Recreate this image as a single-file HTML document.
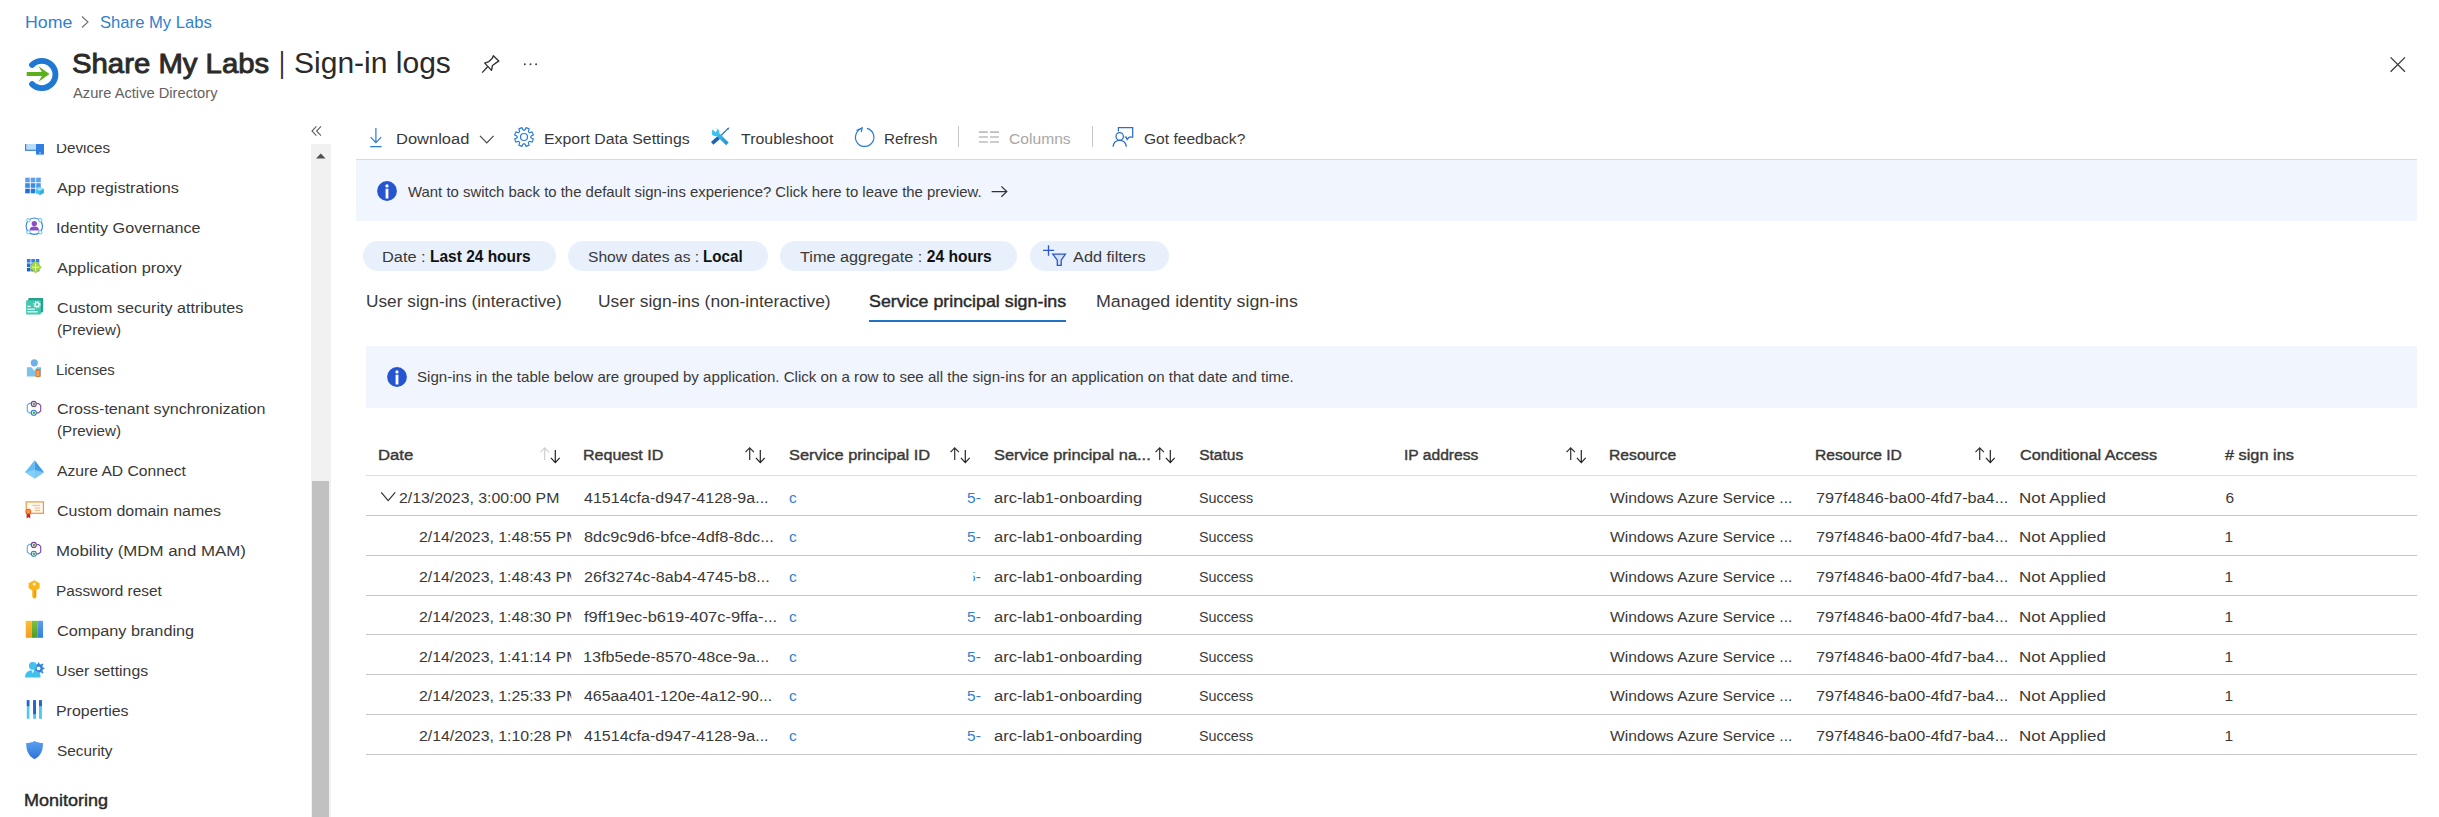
<!DOCTYPE html>
<html lang="en">
<head>
<meta charset="utf-8">
<title>Share My Labs | Sign-in logs - Azure Active Directory</title>
<style>
html,body{margin:0;padding:0;background:#fff}
body{width:2439px;height:817px;overflow:hidden;position:relative;font-family:"Liberation Sans",sans-serif;color:#323130}
.abs{position:absolute;display:block}
.t{position:absolute;white-space:nowrap;line-height:normal;transform-origin:0 0;text-decoration:none;color:#3a3937;font-weight:400}
.bb{font-weight:700}
.b,.sb{font-weight:400;-webkit-text-stroke:0.42px currentColor}
.ttl .b{-webkit-text-stroke:0.9px currentColor}
.lnk{color:#337fd0}
h1,h2,ul,li{margin:0;padding:0;font-weight:400;font-size:inherit;list-style:none}
#side{position:absolute;left:0;top:144px;width:310px;height:673px;overflow:hidden}
#side .in{position:absolute;left:0;top:-144px;width:310px;height:817px}
#sb{position:absolute;left:310.8px;top:144px;width:20px;height:673px;background:#f1f1f1}
#sb .thumb{position:absolute;left:1.2px;top:337px;width:17px;height:340px;background:#c1c1c1}
#tbline{position:absolute;left:356px;top:158.8px;width:2061px;height:1.3px;background:#d9d9df}
.banner{position:absolute;background:#f1f5fd}
.pill{position:absolute;top:241.2px;height:30.1px;border-radius:15.1px;background:#e7f0fb}
.tr{position:absolute;left:366px;width:2051px;height:1px;background:#c6c6c6}
#thline{position:absolute;left:366px;top:475px;width:2051px;height:1px;background:#dedede}
</style>
</head>
<body>
<header>
<a class="t lnk" style="left:24.8px;top:13px;font-size:17.0px;transform:scaleX(1.0435);">Home</a>
<svg class="abs" style="left:80px;top:15px" width="10" height="14" viewBox="0 0 10 14"><path d="M2 1.5 L8 7 L2 12.5" fill="none" stroke="#6f6d6b" stroke-width="1.1"/></svg>
<a class="t lnk" style="left:99.6px;top:13px;font-size:17.0px;transform:scaleX(0.9786);">Share My Labs</a>
<svg class="abs" style="left:20px;top:50px" width="48" height="48" viewBox="0 0 48 48">
<path d="M12.1 14.9 A13.65 13.65 0 1 1 12.1 34.1" fill="none" stroke="#1f78d1" stroke-width="5.9" stroke-linecap="round"/>
<path d="M6.7 24 H27" fill="none" stroke="#5bb01c" stroke-width="4"/>
<path d="M18.5 16.3 L29.5 24 L18.5 31.7 L23 24 Z" fill="#5bb01c"/>
</svg>
<h1 class="ttl"><span class="t b" style="left:72.3px;top:48px;font-size:27.8px;transform:scaleX(1.0548);color:#2b2a29;">Share My Labs</span><span class="t" style="left:278.7px;top:47px;font-size:29.0px;color:#3a2a20;transform:scaleX(0.8);">|</span><span class="t" style="left:293.5px;top:47px;font-size:28.6px;transform:scaleX(1.0499);color:#2b2a29;">Sign-in logs</span></h1>
<span class="t" style="left:73.0px;top:85px;font-size:14.6px;transform:scaleX(1.0065);color:#646260;">Azure Active Directory</span>
<svg class="abs" style="left:480px;top:54px" width="22" height="22" viewBox="0 0 22 22"><g fill="none" stroke="#323130" stroke-width="1.35" stroke-linejoin="round" stroke-linecap="butt">
<path d="M13.3 1.7 L18.8 7.1 L16.7 8.4 L12.5 11.5 L11.5 16.4 L4.7 9.1 L8.9 7.6 L12.3 4.2 Z"/><path d="M7.6 12.8 L2.2 18.6"/></g></svg>
<svg class="abs" style="left:522px;top:62px" width="18" height="6" viewBox="0 0 18 6"><circle cx="2.8" cy="2.3" r="0.95" fill="#3b3a39"/><circle cx="8.5" cy="2.3" r="0.95" fill="#3b3a39"/><circle cx="14.1" cy="2.3" r="0.95" fill="#3b3a39"/></svg>
<svg class="abs" style="left:2388px;top:55px" width="20" height="20" viewBox="0 0 20 20"><path d="M2.6 2.4 L17 16.8 M17 2.4 L2.6 16.8" stroke="#3b3a39" stroke-width="1.3" fill="none"/></svg>
</header>
<div class="abs" style="left:309.6px;top:124px;width:14px;height:14px"><svg class="abs" style="left:0;top:0" width="14" height="14" viewBox="0 0 14 14"><path d="M6.4 2.4 L2 7 L6.4 11.6 M11 2.4 L6.6 7 L11 11.6" fill="none" stroke="#605e5c" stroke-width="1.1"/></svg></div>
<nav id="side"><div class="in">
<ul>
<li><svg class="abs" style="left:24px;top:137px" width="22" height="20" viewBox="0 0 22 20"><rect x="1.6" y="2" width="11" height="11.3" fill="#b9dcf7" stroke="#3f7edc" stroke-width="1.2"/><rect x="12" y="2" width="8" height="15.6" fill="#2f7fe0"/><rect x="15" y="15.4" width="2" height="1.2" fill="#9cc9f5"/></svg><span class="t" style="left:55.9px;top:139px;font-size:15.5px;transform:scaleX(0.9820);">Devices</span></li>
<li><svg class="abs" style="left:24px;top:176px" width="22" height="22" viewBox="0 0 22 22"><rect x="1.2" y="1.7" width="4.6" height="4.6" fill="#5ea0ef"/><rect x="6.7" y="1.7" width="4.6" height="4.6" fill="#5ea0ef"/><rect x="12.2" y="1.7" width="4.6" height="4.6" fill="#5ea0ef"/><rect x="1.2" y="7.2" width="4.6" height="4.6" fill="#3b8be6"/><rect x="6.7" y="7.2" width="4.6" height="4.6" fill="#3b8be6"/><rect x="12.2" y="7.2" width="4.6" height="4.6" fill="#4f98ec"/><rect x="1.2" y="12.7" width="4.6" height="4.6" fill="#1f6fd6"/><rect x="6.7" y="12.7" width="4.6" height="4.6" fill="#2a7ade"/><rect x="12.2" y="12.7" width="4.6" height="4.6" fill="#3b8be6"/><path d="M15.8 11 L19.8 13 L19.8 17 L15.8 19 L11.9 17 L11.9 13 Z" fill="#49c5ee"/><path d="M15.8 11 L19.8 13 L15.8 15 L11.9 13 Z" fill="#9be3f9"/><path d="M15.8 15 L15.8 19 L19.8 17 L19.8 13 Z" fill="#32b0e7"/></svg><span class="t" style="left:56.9px;top:179px;font-size:15.5px;transform:scaleX(1.0475);">App registrations</span></li>
<li><svg class="abs" style="left:24px;top:216px" width="22" height="22" viewBox="0 0 22 22"><circle cx="10.3" cy="10.2" r="8.2" fill="none" stroke="#3b7fd9" stroke-width="1.1"/><circle cx="10.3" cy="7.6" r="2.7" fill="#8a4fc4"/><path d="M5.6 14.6 C5.6 11.2 8 10.6 10.3 10.6 C12.6 10.6 15 11.2 15 14.6 Z" fill="#8a4fc4"/><g fill="#fff" stroke="#4fc3e8" stroke-width="1"><circle cx="4.4" cy="4.2" r="1.7"/><circle cx="16.2" cy="4.2" r="1.7"/><circle cx="4.4" cy="16.2" r="1.7"/><circle cx="16.2" cy="16.2" r="1.7"/></g></svg><span class="t" style="left:55.9px;top:219px;font-size:15.5px;transform:scaleX(1.0423);">Identity Governance</span></li>
<li><svg class="abs" style="left:24px;top:256px" width="22" height="22" viewBox="0 0 22 22"><rect x="2.9" y="3.0" width="3.6" height="3.6" fill="#2f7fe0"/><rect x="7.3" y="3.0" width="3.6" height="3.6" fill="#2f7fe0"/><rect x="11.7" y="3.0" width="3.6" height="3.6" fill="#2f7fe0"/><rect x="2.9" y="7.4" width="3.6" height="3.6" fill="#1f6fd6"/><rect x="7.3" y="7.4" width="3.6" height="3.6" fill="#1f6fd6"/><rect x="11.7" y="7.4" width="3.6" height="3.6" fill="#1f6fd6"/><rect x="2.9" y="11.8" width="3.6" height="3.6" fill="#1a5fc0"/><rect x="7.3" y="11.8" width="3.6" height="3.6" fill="#1a5fc0"/><rect x="11.7" y="11.8" width="3.6" height="3.6" fill="#1a5fc0"/><path d="M11.6 4.8 L17.8 11.2 L11.6 17.6 L5.4 11.2 Z" fill="#a6d63f"/><path d="M11.6 7.6 L11.6 14.8 M8 11.2 L15.2 11.2" stroke="#e8f5b8" stroke-width="1.1"/></svg><span class="t" style="left:56.9px;top:259px;font-size:15.5px;transform:scaleX(1.0568);">Application proxy</span></li>
<li><svg class="abs" style="left:24px;top:296px" width="22" height="22" viewBox="0 0 22 22"><rect x="4.3" y="2" width="14.9" height="14.4" rx="0.8" fill="#27a08c"/><rect x="2.1" y="4.3" width="14.8" height="14.3" rx="0.8" fill="#43c8b0"/><path d="M3.4 10.4 H6.6 M3.4 13.1 H10.9 M3.4 15.8 H13.6" stroke="#e9fbf7" stroke-width="1.4"/><circle cx="13.1" cy="8.6" r="2" fill="none" stroke="#fff" stroke-width="1.3"/><circle cx="13.1" cy="8.6" r="3.1" fill="none" stroke="#fff" stroke-width="1.1" stroke-dasharray="1.1 1.33"/></svg><span class="t" style="left:56.9px;top:299px;font-size:15.5px;transform:scaleX(1.0394);">Custom security attributes</span><span class="t" style="left:56.9px;top:321px;font-size:15.5px;transform:scaleX(0.9772);">(Preview)</span></li>
<li><svg class="abs" style="left:24px;top:357px" width="22" height="22" viewBox="0 0 22 22"><circle cx="10.3" cy="5.8" r="3.6" fill="#6fb2e6"/><path d="M2.9 10.2 L7.6 10.2 L10.3 14 L13 10.2 L17.1 10.2 L17.1 19.6 L2.9 19.6 Z" fill="#7cc3e8"/><rect x="11.6" y="12" width="4.8" height="8" rx="0.6" fill="#e8792a"/><rect x="12.6" y="14" width="2.6" height="5" fill="#f3a35c"/></svg><span class="t" style="left:55.9px;top:361px;font-size:15.5px;transform:scaleX(0.9615);">Licenses</span></li>
<li><svg class="abs" style="left:24px;top:398px" width="22" height="22" viewBox="0 0 22 22"><g fill="none" stroke-width="1.15" stroke-linejoin="round"><path d="M7.6 5.3 H5.3 L3.3 7.2 V13.1 L5.3 14.9 H7.4" stroke="#62add8"/><path d="M12.2 5.5 H14.5 L16.7 7.4 V13 L14.5 14.9 H12.2" stroke="#8448ad"/></g><circle cx="9.8" cy="5.9" r="2.5" fill="#fff" stroke="#7a3fa6" stroke-width="1.15"/><circle cx="9.9" cy="5.9" r="1.25" fill="#5fa82e"/><circle cx="9.8" cy="14.7" r="2.5" fill="#fff" stroke="#2f7fd0" stroke-width="1.15"/><circle cx="9.9" cy="14.7" r="1.25" fill="#5fa82e"/></svg><span class="t" style="left:56.9px;top:400px;font-size:15.5px;transform:scaleX(1.0384);">Cross-tenant synchronization</span><span class="t" style="left:56.9px;top:422px;font-size:15.5px;transform:scaleX(0.9772);">(Preview)</span></li>
<li><svg class="abs" style="left:24px;top:459px" width="22" height="22" viewBox="0 0 22 22"><path d="M10.7 1.2 L1 13.2 L10.7 19.4 Z" fill="#62bdf3"/><path d="M10.7 1.2 L20 13.2 L10.7 19.4 Z" fill="#3f9ae8"/><path d="M1 13.2 L10.7 10.8 L20 13.2 L10.7 19.4 Z" fill="#8fd6f9" opacity="0.75"/></svg><span class="t" style="left:56.9px;top:462px;font-size:15.5px;transform:scaleX(1.0104);">Azure AD Connect</span></li>
<li><svg class="abs" style="left:24px;top:499px" width="22" height="22" viewBox="0 0 22 22"><rect x="2.2" y="2.9" width="17.2" height="11.4" fill="#fff8ef" stroke="#e99a3f" stroke-width="1.2"/><path d="M8.4 6.4 H16 M10.6 9 H16 M10.6 11.4 H16" stroke="#f0b27a" stroke-width="0.9"/><path d="M2.6 14 L2.6 19.4 L4.4 18 L6.2 19.4 L6.2 14 Z" fill="#c8241c"/><circle cx="4.4" cy="12.6" r="2.5" fill="#f59a2e" stroke="#e4572b" stroke-width="0.9"/></svg><span class="t" style="left:56.9px;top:502px;font-size:15.5px;transform:scaleX(1.0293);">Custom domain names</span></li>
<li><svg class="abs" style="left:24px;top:539px" width="22" height="22" viewBox="0 0 22 22"><g fill="none" stroke-width="1.15" stroke-linejoin="round"><path d="M7.6 5.3 H5.3 L3.3 7.2 V13.1 L5.3 14.9 H7.4" stroke="#62add8"/><path d="M12.2 5.5 H14.5 L16.7 7.4 V13 L14.5 14.9 H12.2" stroke="#8448ad"/></g><circle cx="9.8" cy="5.9" r="2.5" fill="#fff" stroke="#7a3fa6" stroke-width="1.15"/><circle cx="9.9" cy="5.9" r="1.25" fill="#5fa82e"/><circle cx="9.8" cy="14.7" r="2.5" fill="#fff" stroke="#2f7fd0" stroke-width="1.15"/><circle cx="9.9" cy="14.7" r="1.25" fill="#5fa82e"/></svg><span class="t" style="left:55.8px;top:542px;font-size:15.5px;transform:scaleX(1.0860);">Mobility (MDM and MAM)</span></li>
<li><svg class="abs" style="left:24px;top:578px" width="22" height="24" viewBox="0 0 22 24"><path d="M10.2 2.2 L15.6 5.2 L15.6 10 L12.2 12.6 L12.2 19 L10.2 20.8 L8.2 19 L8.2 12.6 L4.6 10 L4.6 5.2 Z" fill="#f9b51c"/><circle cx="10.2" cy="6" r="1.5" fill="#fff3cf"/><path d="M10.2 12 L10.2 20.6 L12.2 19 L12.2 12.6 Z" fill="#e89a10"/></svg><span class="t" style="left:55.9px;top:582px;font-size:15.5px;transform:scaleX(0.9895);">Password reset</span></li>
<li><svg class="abs" style="left:24px;top:619px" width="22" height="22" viewBox="0 0 22 22"><defs><linearGradient id="gy" x1="0" y1="0" x2="0" y2="1"><stop offset="0" stop-color="#fbc02d"/><stop offset="1" stop-color="#f59a23"/></linearGradient><linearGradient id="gg" x1="0" y1="0" x2="0" y2="1"><stop offset="0" stop-color="#7cc142"/><stop offset="1" stop-color="#4c9a2a"/></linearGradient><linearGradient id="gb" x1="0" y1="0" x2="0" y2="1"><stop offset="0" stop-color="#5ea0ef"/><stop offset="1" stop-color="#2f7fe0"/></linearGradient></defs><rect x="1.8" y="1.8" width="5.5" height="17" fill="url(#gy)"/><rect x="7.5" y="1.8" width="5.5" height="17" fill="url(#gg)"/><rect x="13.2" y="1.8" width="5.8" height="17" fill="url(#gb)"/></svg><span class="t" style="left:56.9px;top:622px;font-size:15.5px;transform:scaleX(1.0464);">Company branding</span></li>
<li><svg class="abs" style="left:24px;top:659px" width="22" height="22" viewBox="0 0 22 22"><g fill="#2f7fe0"><circle cx="14.6" cy="9.4" r="4.4"/><path d="M14 3.4 l1.2 0 l0.4 2 l-2 0Z M20.4 8.8 l0 1.2 l-2 0.4 l0 -2Z M18.6 4.4 l0.9 0.9 l-1.2 1.7 l-1.4 -1.4Z M18.6 14.4 l0.9 -0.9 l-1.2 -1.7 l-1.4 1.4Z M14 15.4 l1.2 0 l0.4 -2 l-2 0Z"/></g><circle cx="14.6" cy="9.4" r="1.9" fill="#fff"/><circle cx="8.8" cy="6.8" r="3.9" fill="#3fc1ee"/><path d="M1 18.6 C1 12.6 5 11.2 8.8 11.2 C12.6 11.2 16.6 12.6 16.6 18.6 Z" fill="#3fc1ee"/><path d="M7.4 11.2 L8.8 14.6 L10.2 11.2 Z" fill="#e9f8fe"/></svg><span class="t" style="left:55.9px;top:662px;font-size:15.5px;transform:scaleX(1.0178);">User settings</span></li>
<li><svg class="abs" style="left:24px;top:699px" width="22" height="22" viewBox="0 0 22 22"><rect x="2.8" y="1.2" width="2.6" height="18.6" fill="#4fc8ee"/><rect x="2.8" y="1.2" width="2.6" height="6" fill="#2467c9"/><rect x="9.1" y="1.2" width="2.9" height="18.6" fill="#4fc8ee"/><rect x="9.1" y="1.2" width="2.9" height="14" fill="#2467c9"/><rect x="15" y="1.2" width="2.9" height="18.6" fill="#4fc8ee"/><rect x="15" y="1.2" width="2.9" height="6" fill="#2467c9"/></svg><span class="t" style="left:55.9px;top:702px;font-size:15.5px;transform:scaleX(1.0273);">Properties</span></li>
<li><svg class="abs" style="left:24px;top:739px" width="22" height="22" viewBox="0 0 22 22"><defs><linearGradient id="gs" x1="0" y1="0" x2="0" y2="1"><stop offset="0" stop-color="#5ea0ef"/><stop offset="1" stop-color="#2a74d8"/></linearGradient></defs><path d="M10.6 2 C13.4 3.6 16.4 4 19 4 C19 11 17.4 16.6 10.6 20.2 C3.8 16.6 2.2 11 2.2 4 C4.8 4 7.8 3.6 10.6 2 Z" fill="url(#gs)"/></svg><span class="t" style="left:56.9px;top:742px;font-size:15.5px;transform:scaleX(0.9922);">Security</span></li>
</ul>
<h2><span class="t b" style="left:24.2px;top:791px;font-size:16.4px;transform:scaleX(1.0993);color:#2b2a29;">Monitoring</span></h2>
</div></nav>
<div id="sb"><svg class="abs" style="left:5px;top:8.6px" width="10" height="6" viewBox="0 0 10 6"><path d="M0 5.6 L4.8 0.4 L9.6 5.6 Z" fill="#505050"/></svg><div class="thumb"></div></div>
<main>
<div id="toolbar" role="toolbar">
<div class="cmd"><svg class="abs" style="left:366px;top:126px" width="20" height="24" viewBox="0 0 20 24"><g fill="none" stroke="#2b7bd3" stroke-width="1.2"><path d="M9.9 2 V16.4 M4.6 11.2 L9.9 16.6 L15.2 11.2 M4.2 20.6 H15.6"/></g></svg><span class="t" style="left:395.9px;top:130px;font-size:15.5px;transform:scaleX(1.0637);">Download</span><svg class="abs" style="left:478px;top:133px" width="18" height="13" viewBox="0 0 18 13"><path d="M2 2.8 L8.8 9.8 L15.6 2.8" fill="none" stroke="#484644" stroke-width="1.2"/></svg></div>
<div class="cmd"><svg class="abs" style="left:511.8px;top:125px" width="24" height="24" viewBox="0 0 24 24"><path d="M12.78 5.14 L14.12 2.64 L17.12 3.88 L16.30 6.60 L17.40 7.70 L20.12 6.88 L21.36 9.88 L18.86 11.22 L18.86 12.78 L21.36 14.12 L20.12 17.12 L17.40 16.30 L16.30 17.40 L17.12 20.12 L14.12 21.36 L12.78 18.86 L11.22 18.86 L9.88 21.36 L6.88 20.12 L7.70 17.40 L6.60 16.30 L3.88 17.12 L2.64 14.12 L5.14 12.78 L5.14 11.22 L2.64 9.88 L3.88 6.88 L6.60 7.70 L7.70 6.60 L6.88 3.88 L9.88 2.64 L11.22 5.14 Z" fill="none" stroke="#2b7bd3" stroke-width="1.15" stroke-linejoin="round"/><circle cx="12" cy="12" r="3.5" fill="none" stroke="#2b7bd3" stroke-width="1.2"/></svg><span class="t" style="left:544.1px;top:130px;font-size:15.5px;transform:scaleX(1.0247);">Export Data Settings</span></div>
<div class="cmd"><svg class="abs" style="left:708px;top:126px" width="24" height="24" viewBox="0 0 24 24"><defs><linearGradient id="gw" x1="0" y1="0" x2="1" y2="1"><stop offset="0" stop-color="#3cc3f0"/><stop offset="1" stop-color="#2a93cc"/></linearGradient></defs><path d="M11.3 11.3 L20.4 2.1" stroke="#2b6fc4" stroke-width="1.3"/><path d="M19 2.6 L21.4 1.2 L20.4 3.8 Z" fill="#2b6fc4"/><path d="M4.2 17.4 L11.2 11.2" stroke="#1c62b8" stroke-width="3.7"/><path d="M8.4 7.2 L19.4 17.8" stroke="url(#gw)" stroke-width="3.7"/><circle cx="7.6" cy="6.4" r="3.8" fill="#3cc3f0"/><path d="M7.4 6.2 L3.8 2.6 L6 0.4 L9.6 4 Z" fill="#fff"/></svg><span class="t" style="left:741.0px;top:130px;font-size:15.5px;transform:scaleX(1.0277);">Troubleshoot</span></div>
<div class="cmd"><svg class="abs" style="left:853px;top:125px" width="24" height="24" viewBox="0 0 24 24"><g fill="none" stroke="#2b7bd3" stroke-width="1.2"><path d="M14.03 3.37 A9.2 9.2 0 1 1 8.9 3.5"/><path d="M3.4 5.5 L9.2 2.8 L8.3 7.1"/></g></svg><span class="t" style="left:884.4px;top:130px;font-size:15.5px;transform:scaleX(0.9838);">Refresh</span></div>
<div class="abs" style="left:958px;top:126px;width:1.2px;height:21px;background:#c8c6c4"></div>
<div class="cmd"><svg class="abs" style="left:978px;top:129px" width="22" height="16" viewBox="0 0 22 16"><path d="M0.9 3.1 H9.9 M12 3.1 H21 M0.9 8 H9.9 M12 8 H21 M0.9 13 H9.9 M12 13 H21" stroke="#bdbdbd" stroke-width="1.7"/></svg><span class="t" style="left:1009.4px;top:130px;font-size:15.5px;transform:scaleX(1.0080);color:#a9a7a5;">Columns</span></div>
<div class="abs" style="left:1092px;top:126px;width:1.2px;height:21px;background:#c8c6c4"></div>
<div class="cmd"><svg class="abs" style="left:1111px;top:125px" width="24" height="24" viewBox="0 0 24 24"><g fill="none" stroke="#2b6fc8" stroke-width="1.25"><circle cx="8.7" cy="11.4" r="3.7"/><path d="M2.1 21.8 C2.6 17 5.5 15.4 8.7 15.4 C11.9 15.4 14.8 17 15.3 21.8"/><path d="M7.4 6.6 V2.7 H21.7 V12 H18.2 L16.1 14.5 L15.3 12.2 H13.6"/></g></svg><span class="t" style="left:1143.6px;top:130px;font-size:15.5px;transform:scaleX(1.0050);">Got feedback?</span></div>

</div>
<div id="tbline"></div>
<div class="banner" style="left:356px;top:160px;width:2061px;height:60.8px"></div>
<svg class="abs" style="left:376.0px;top:180.0px" width="22" height="22" viewBox="0 0 22 22"><circle cx="11" cy="11" r="9.9" fill="#2656cf"/><circle cx="11" cy="5.9" r="1.6" fill="#fff"/><rect x="9.6" y="8.7" width="2.8" height="9.8" fill="#fff"/></svg><span class="t" style="left:407.9px;top:184px;font-size:14.5px;transform:scaleX(1.0281);">Want to switch back to the default sign-ins experience? Click here to leave the preview.</span><svg class="abs" style="left:990px;top:184px" width="20" height="16" viewBox="0 0 20 16"><path d="M1.6 7.6 H16.6 M11.4 2.4 L16.8 7.6 L11.4 12.8" fill="none" stroke="#323130" stroke-width="1.25"/></svg>
<div id="filters">
<div class="pill" style="left:363.0px;width:193.0px"></div><span class="t" style="left:381.9px;top:248px;font-size:15.5px;transform:scaleX(1.0551);">Date :</span><span class="t bb" style="left:429.5px;top:248px;font-size:15.6px;transform:scaleX(0.9929);color:#111;">Last 24 hours</span>
<div class="pill" style="left:568.1px;width:200.1px"></div><span class="t" style="left:588.4px;top:248px;font-size:15.5px;transform:scaleX(1.0075);">Show dates as :</span><span class="t bb" style="left:702.8px;top:248px;font-size:15.6px;transform:scaleX(0.9722);color:#111;">Local</span>
<div class="pill" style="left:779.7px;width:237.0px"></div><span class="t" style="left:800.2px;top:248px;font-size:15.5px;transform:scaleX(1.0486);">Time aggregate :</span><span class="t bb" style="left:926.8px;top:248px;font-size:15.6px;color:#111;">24 hours</span>
<div class="pill" style="left:1030.1px;width:139.3px"></div><svg class="abs" style="left:1042px;top:243px" width="26" height="24" viewBox="0 0 26 24"><g fill="none" stroke="#2f55cc" stroke-width="1.3"><path d="M6.5 2.2 V12.7 M1 7.4 H12.1"/><path d="M10.8 11.1 H23.4 L19.2 17.2 V22.3 H15.3 V17.2 Z" fill="#d5e2fb" stroke-linejoin="miter"/></g></svg><span class="t" style="left:1072.5px;top:248px;font-size:15.5px;transform:scaleX(1.0525);">Add filters</span>
</div>
<div id="tabs" role="tablist">
<span class="t" style="left:366.1px;top:292px;font-size:16.7px;transform:scaleX(1.0345);">User sign-ins (interactive)</span>
<span class="t" style="left:598.3px;top:292px;font-size:16.7px;transform:scaleX(1.0452);">User sign-ins (non-interactive)</span>
<span class="t sb" style="left:868.9px;top:292px;font-size:16.5px;transform:scaleX(1.0804);color:#2b2a29;">Service principal sign-ins</span>
<div class="abs" style="left:868.9px;top:319.7px;width:196.9px;height:2.5px;background:#2472c8"></div>
<span class="t" style="left:1095.7px;top:292px;font-size:16.7px;transform:scaleX(1.0671);">Managed identity sign-ins</span>
</div>
<div class="banner" style="left:366.3px;top:345.9px;width:2050.7px;height:61.9px"></div>
<svg class="abs" style="left:386.0px;top:365.8px" width="22" height="22" viewBox="0 0 22 22"><circle cx="11" cy="11" r="9.9" fill="#2656cf"/><circle cx="11" cy="5.9" r="1.6" fill="#fff"/><rect x="9.6" y="8.7" width="2.8" height="9.8" fill="#fff"/></svg><span class="t" style="left:417.3px;top:369px;font-size:14.5px;transform:scaleX(1.0409);">Sign-ins in the table below are grouped by application. Click on a row to see all the sign-ins for an application on that date and time.</span>
<div id="grid" role="table">
<div class="thead" role="row">
<span class="t b th" style="left:378.3px;top:446px;font-size:15.5px;transform:scaleX(1.0765);">Date</span><svg class="abs" style="left:540.0px;top:446px" width="22" height="19" viewBox="0 0 22 19"><g fill="none" stroke-width="1.2"><path d="M4.7 14 V2 M0.5 6.2 L4.7 1.8 L8.9 6.2" stroke="#d2d0ce"/><path d="M15.3 4.1 V16.5 M10.9 11.8 L15.3 16.6 L19.7 11.8" stroke="#252423"/></g></svg>
<span class="t b th" style="left:583.2px;top:446px;font-size:15.5px;transform:scaleX(1.0348);">Request ID</span><svg class="abs" style="left:744.7px;top:446px" width="22" height="19" viewBox="0 0 22 19"><g fill="none" stroke-width="1.2"><path d="M4.7 14 V2 M0.5 6.2 L4.7 1.8 L8.9 6.2" stroke="#323130"/><path d="M15.3 4.1 V16.5 M10.9 11.8 L15.3 16.6 L19.7 11.8" stroke="#252423"/></g></svg>
<span class="t b th" style="left:789.1px;top:446px;font-size:15.5px;transform:scaleX(1.0568);">Service principal ID</span><svg class="abs" style="left:949.8px;top:446px" width="22" height="19" viewBox="0 0 22 19"><g fill="none" stroke-width="1.2"><path d="M4.7 14 V2 M0.5 6.2 L4.7 1.8 L8.9 6.2" stroke="#323130"/><path d="M15.3 4.1 V16.5 M10.9 11.8 L15.3 16.6 L19.7 11.8" stroke="#252423"/></g></svg>
<span class="t b th" style="left:994.3px;top:446px;font-size:15.5px;transform:scaleX(1.0574);">Service principal na...</span><svg class="abs" style="left:1154.8px;top:446px" width="22" height="19" viewBox="0 0 22 19"><g fill="none" stroke-width="1.2"><path d="M4.7 14 V2 M0.5 6.2 L4.7 1.8 L8.9 6.2" stroke="#323130"/><path d="M15.3 4.1 V16.5 M10.9 11.8 L15.3 16.6 L19.7 11.8" stroke="#252423"/></g></svg>
<span class="t b th" style="left:1199.2px;top:446px;font-size:15.5px;">Status</span>
<span class="t b th" style="left:1403.5px;top:446px;font-size:15.5px;transform:scaleX(1.0062);">IP address</span><svg class="abs" style="left:1566.0px;top:446px" width="22" height="19" viewBox="0 0 22 19"><g fill="none" stroke-width="1.2"><path d="M4.7 14 V2 M0.5 6.2 L4.7 1.8 L8.9 6.2" stroke="#323130"/><path d="M15.3 4.1 V16.5 M10.9 11.8 L15.3 16.6 L19.7 11.8" stroke="#252423"/></g></svg>
<span class="t b th" style="left:1609.4px;top:446px;font-size:15.5px;transform:scaleX(1.0121);">Resource</span>
<span class="t b th" style="left:1814.6px;top:446px;font-size:15.5px;transform:scaleX(1.0088);">Resource ID</span><svg class="abs" style="left:1975.4px;top:446px" width="22" height="19" viewBox="0 0 22 19"><g fill="none" stroke-width="1.2"><path d="M4.7 14 V2 M0.5 6.2 L4.7 1.8 L8.9 6.2" stroke="#323130"/><path d="M15.3 4.1 V16.5 M10.9 11.8 L15.3 16.6 L19.7 11.8" stroke="#252423"/></g></svg>
<span class="t b th" style="left:2020.1px;top:446px;font-size:15.5px;transform:scaleX(1.0464);">Conditional Access</span>
<span class="t b th" style="left:2225.4px;top:446px;font-size:15.5px;transform:scaleX(1.0512);"># sign ins</span>
</div>
<div id="thline"></div>
<div class="row" role="row"><div class="tr" style="top:515px"></div><svg class="abs" style="left:379px;top:489px" width="18" height="16" viewBox="0 0 18 16"><path d="M2.2 3.4 L9.2 11.6 L16.2 3.4" fill="none" stroke="#323130" stroke-width="1.2"/></svg><span class="t" style="left:399.3px;top:489px;font-size:15.5px;transform:scaleX(1.0223);">2/13/2023, 3:00:00 PM</span><span class="t" style="left:584.2px;top:489px;font-size:15.5px;transform:scaleX(1.0346);">41514cfa-d947-4128-9a...</span><a class="t lnk" style="left:789.1px;top:489px;font-size:15.5px;">c</a><a class="t lnk" style="left:967.1px;top:489px;font-size:15.5px;">5-</a><span class="t" style="left:994.3px;top:489px;font-size:15.5px;transform:scaleX(1.0687);">arc-lab1-onboarding</span><span class="t" style="left:1199.2px;top:489px;font-size:15.5px;transform:scaleX(0.9247);">Success</span><span class="t" style="left:1610.4px;top:489px;font-size:15.5px;transform:scaleX(1.0134);">Windows Azure Service ...</span><span class="t" style="left:1815.6px;top:489px;font-size:15.5px;transform:scaleX(1.0469);">797f4846-ba00-4fd7-ba4...</span><span class="t" style="left:2019.0px;top:489px;font-size:15.5px;transform:scaleX(1.0954);">Not Applied</span><span class="t" style="left:2225.4px;top:489px;font-size:15.5px;">6</span></div>
<div class="row" role="row"><div class="tr" style="top:555px"></div><span class="t" style="left:418.8px;top:528px;font-size:15.5px;transform:scaleX(1.0223);width:148.5px;overflow:hidden;">2/14/2023, 1:48:55 PM</span><span class="t" style="left:584.2px;top:528px;font-size:15.5px;transform:scaleX(1.0538);">8dc9c9d6-bfce-4df8-8dc...</span><a class="t lnk" style="left:789.1px;top:528px;font-size:15.5px;">c</a><a class="t lnk" style="left:967.1px;top:528px;font-size:15.5px;">5-</a><span class="t" style="left:994.3px;top:528px;font-size:15.5px;transform:scaleX(1.0687);">arc-lab1-onboarding</span><span class="t" style="left:1199.2px;top:528px;font-size:15.5px;transform:scaleX(0.9247);">Success</span><span class="t" style="left:1610.4px;top:528px;font-size:15.5px;transform:scaleX(1.0134);">Windows Azure Service ...</span><span class="t" style="left:1815.6px;top:528px;font-size:15.5px;transform:scaleX(1.0469);">797f4846-ba00-4fd7-ba4...</span><span class="t" style="left:2019.0px;top:528px;font-size:15.5px;transform:scaleX(1.0954);">Not Applied</span><span class="t" style="left:2224.4px;top:528px;font-size:15.5px;">1</span></div>
<div class="row" role="row"><div class="tr" style="top:595px"></div><span class="t" style="left:418.8px;top:568px;font-size:15.5px;transform:scaleX(1.0223);width:148.5px;overflow:hidden;">2/14/2023, 1:48:43 PM</span><span class="t" style="left:584.2px;top:568px;font-size:15.5px;transform:scaleX(1.0413);">26f3274c-8ab4-4745-b8...</span><a class="t lnk" style="left:789.1px;top:568px;font-size:15.5px;">c</a><a class="t lnk" style="left:967.1px;top:568px;font-size:15.5px;clip-path:inset(0 0 0 6.3px);">5-</a><span class="t" style="left:994.3px;top:568px;font-size:15.5px;transform:scaleX(1.0687);">arc-lab1-onboarding</span><span class="t" style="left:1199.2px;top:568px;font-size:15.5px;transform:scaleX(0.9247);">Success</span><span class="t" style="left:1610.4px;top:568px;font-size:15.5px;transform:scaleX(1.0134);">Windows Azure Service ...</span><span class="t" style="left:1815.6px;top:568px;font-size:15.5px;transform:scaleX(1.0469);">797f4846-ba00-4fd7-ba4...</span><span class="t" style="left:2019.0px;top:568px;font-size:15.5px;transform:scaleX(1.0954);">Not Applied</span><span class="t" style="left:2224.4px;top:568px;font-size:15.5px;">1</span></div>
<div class="row" role="row"><div class="tr" style="top:634px"></div><span class="t" style="left:418.8px;top:608px;font-size:15.5px;transform:scaleX(1.0223);width:148.5px;overflow:hidden;">2/14/2023, 1:48:30 PM</span><span class="t" style="left:584.2px;top:608px;font-size:15.5px;transform:scaleX(1.0609);">f9ff19ec-b619-407c-9ffa-...</span><a class="t lnk" style="left:789.1px;top:608px;font-size:15.5px;">c</a><a class="t lnk" style="left:967.1px;top:608px;font-size:15.5px;">5-</a><span class="t" style="left:994.3px;top:608px;font-size:15.5px;transform:scaleX(1.0687);">arc-lab1-onboarding</span><span class="t" style="left:1199.2px;top:608px;font-size:15.5px;transform:scaleX(0.9247);">Success</span><span class="t" style="left:1610.4px;top:608px;font-size:15.5px;transform:scaleX(1.0134);">Windows Azure Service ...</span><span class="t" style="left:1815.6px;top:608px;font-size:15.5px;transform:scaleX(1.0469);">797f4846-ba00-4fd7-ba4...</span><span class="t" style="left:2019.0px;top:608px;font-size:15.5px;transform:scaleX(1.0954);">Not Applied</span><span class="t" style="left:2224.4px;top:608px;font-size:15.5px;">1</span></div>
<div class="row" role="row"><div class="tr" style="top:674px"></div><span class="t" style="left:418.8px;top:648px;font-size:15.5px;transform:scaleX(1.0223);width:148.5px;overflow:hidden;">2/14/2023, 1:41:14 PM</span><span class="t" style="left:583.2px;top:648px;font-size:15.5px;transform:scaleX(1.0438);">13fb5ede-8570-48ce-9a...</span><a class="t lnk" style="left:789.1px;top:648px;font-size:15.5px;">c</a><a class="t lnk" style="left:967.1px;top:648px;font-size:15.5px;">5-</a><span class="t" style="left:994.3px;top:648px;font-size:15.5px;transform:scaleX(1.0687);">arc-lab1-onboarding</span><span class="t" style="left:1199.2px;top:648px;font-size:15.5px;transform:scaleX(0.9247);">Success</span><span class="t" style="left:1610.4px;top:648px;font-size:15.5px;transform:scaleX(1.0134);">Windows Azure Service ...</span><span class="t" style="left:1815.6px;top:648px;font-size:15.5px;transform:scaleX(1.0469);">797f4846-ba00-4fd7-ba4...</span><span class="t" style="left:2019.0px;top:648px;font-size:15.5px;transform:scaleX(1.0954);">Not Applied</span><span class="t" style="left:2224.4px;top:648px;font-size:15.5px;">1</span></div>
<div class="row" role="row"><div class="tr" style="top:714px"></div><span class="t" style="left:418.8px;top:687px;font-size:15.5px;transform:scaleX(1.0223);width:148.5px;overflow:hidden;">2/14/2023, 1:25:33 PM</span><span class="t" style="left:584.2px;top:687px;font-size:15.5px;transform:scaleX(1.0249);">465aa401-120e-4a12-90...</span><a class="t lnk" style="left:789.1px;top:687px;font-size:15.5px;">c</a><a class="t lnk" style="left:967.1px;top:687px;font-size:15.5px;">5-</a><span class="t" style="left:994.3px;top:687px;font-size:15.5px;transform:scaleX(1.0687);">arc-lab1-onboarding</span><span class="t" style="left:1199.2px;top:687px;font-size:15.5px;transform:scaleX(0.9247);">Success</span><span class="t" style="left:1610.4px;top:687px;font-size:15.5px;transform:scaleX(1.0134);">Windows Azure Service ...</span><span class="t" style="left:1815.6px;top:687px;font-size:15.5px;transform:scaleX(1.0469);">797f4846-ba00-4fd7-ba4...</span><span class="t" style="left:2019.0px;top:687px;font-size:15.5px;transform:scaleX(1.0954);">Not Applied</span><span class="t" style="left:2224.4px;top:687px;font-size:15.5px;">1</span></div>
<div class="row" role="row"><div class="tr" style="top:754px"></div><span class="t" style="left:418.8px;top:727px;font-size:15.5px;transform:scaleX(1.0223);width:148.5px;overflow:hidden;">2/14/2023, 1:10:28 PM</span><span class="t" style="left:584.2px;top:727px;font-size:15.5px;transform:scaleX(1.0346);">41514cfa-d947-4128-9a...</span><a class="t lnk" style="left:789.1px;top:727px;font-size:15.5px;">c</a><a class="t lnk" style="left:967.1px;top:727px;font-size:15.5px;">5-</a><span class="t" style="left:994.3px;top:727px;font-size:15.5px;transform:scaleX(1.0687);">arc-lab1-onboarding</span><span class="t" style="left:1199.2px;top:727px;font-size:15.5px;transform:scaleX(0.9247);">Success</span><span class="t" style="left:1610.4px;top:727px;font-size:15.5px;transform:scaleX(1.0134);">Windows Azure Service ...</span><span class="t" style="left:1815.6px;top:727px;font-size:15.5px;transform:scaleX(1.0469);">797f4846-ba00-4fd7-ba4...</span><span class="t" style="left:2019.0px;top:727px;font-size:15.5px;transform:scaleX(1.0954);">Not Applied</span><span class="t" style="left:2224.4px;top:727px;font-size:15.5px;">1</span></div>
</div>
</main>
</body>
</html>
